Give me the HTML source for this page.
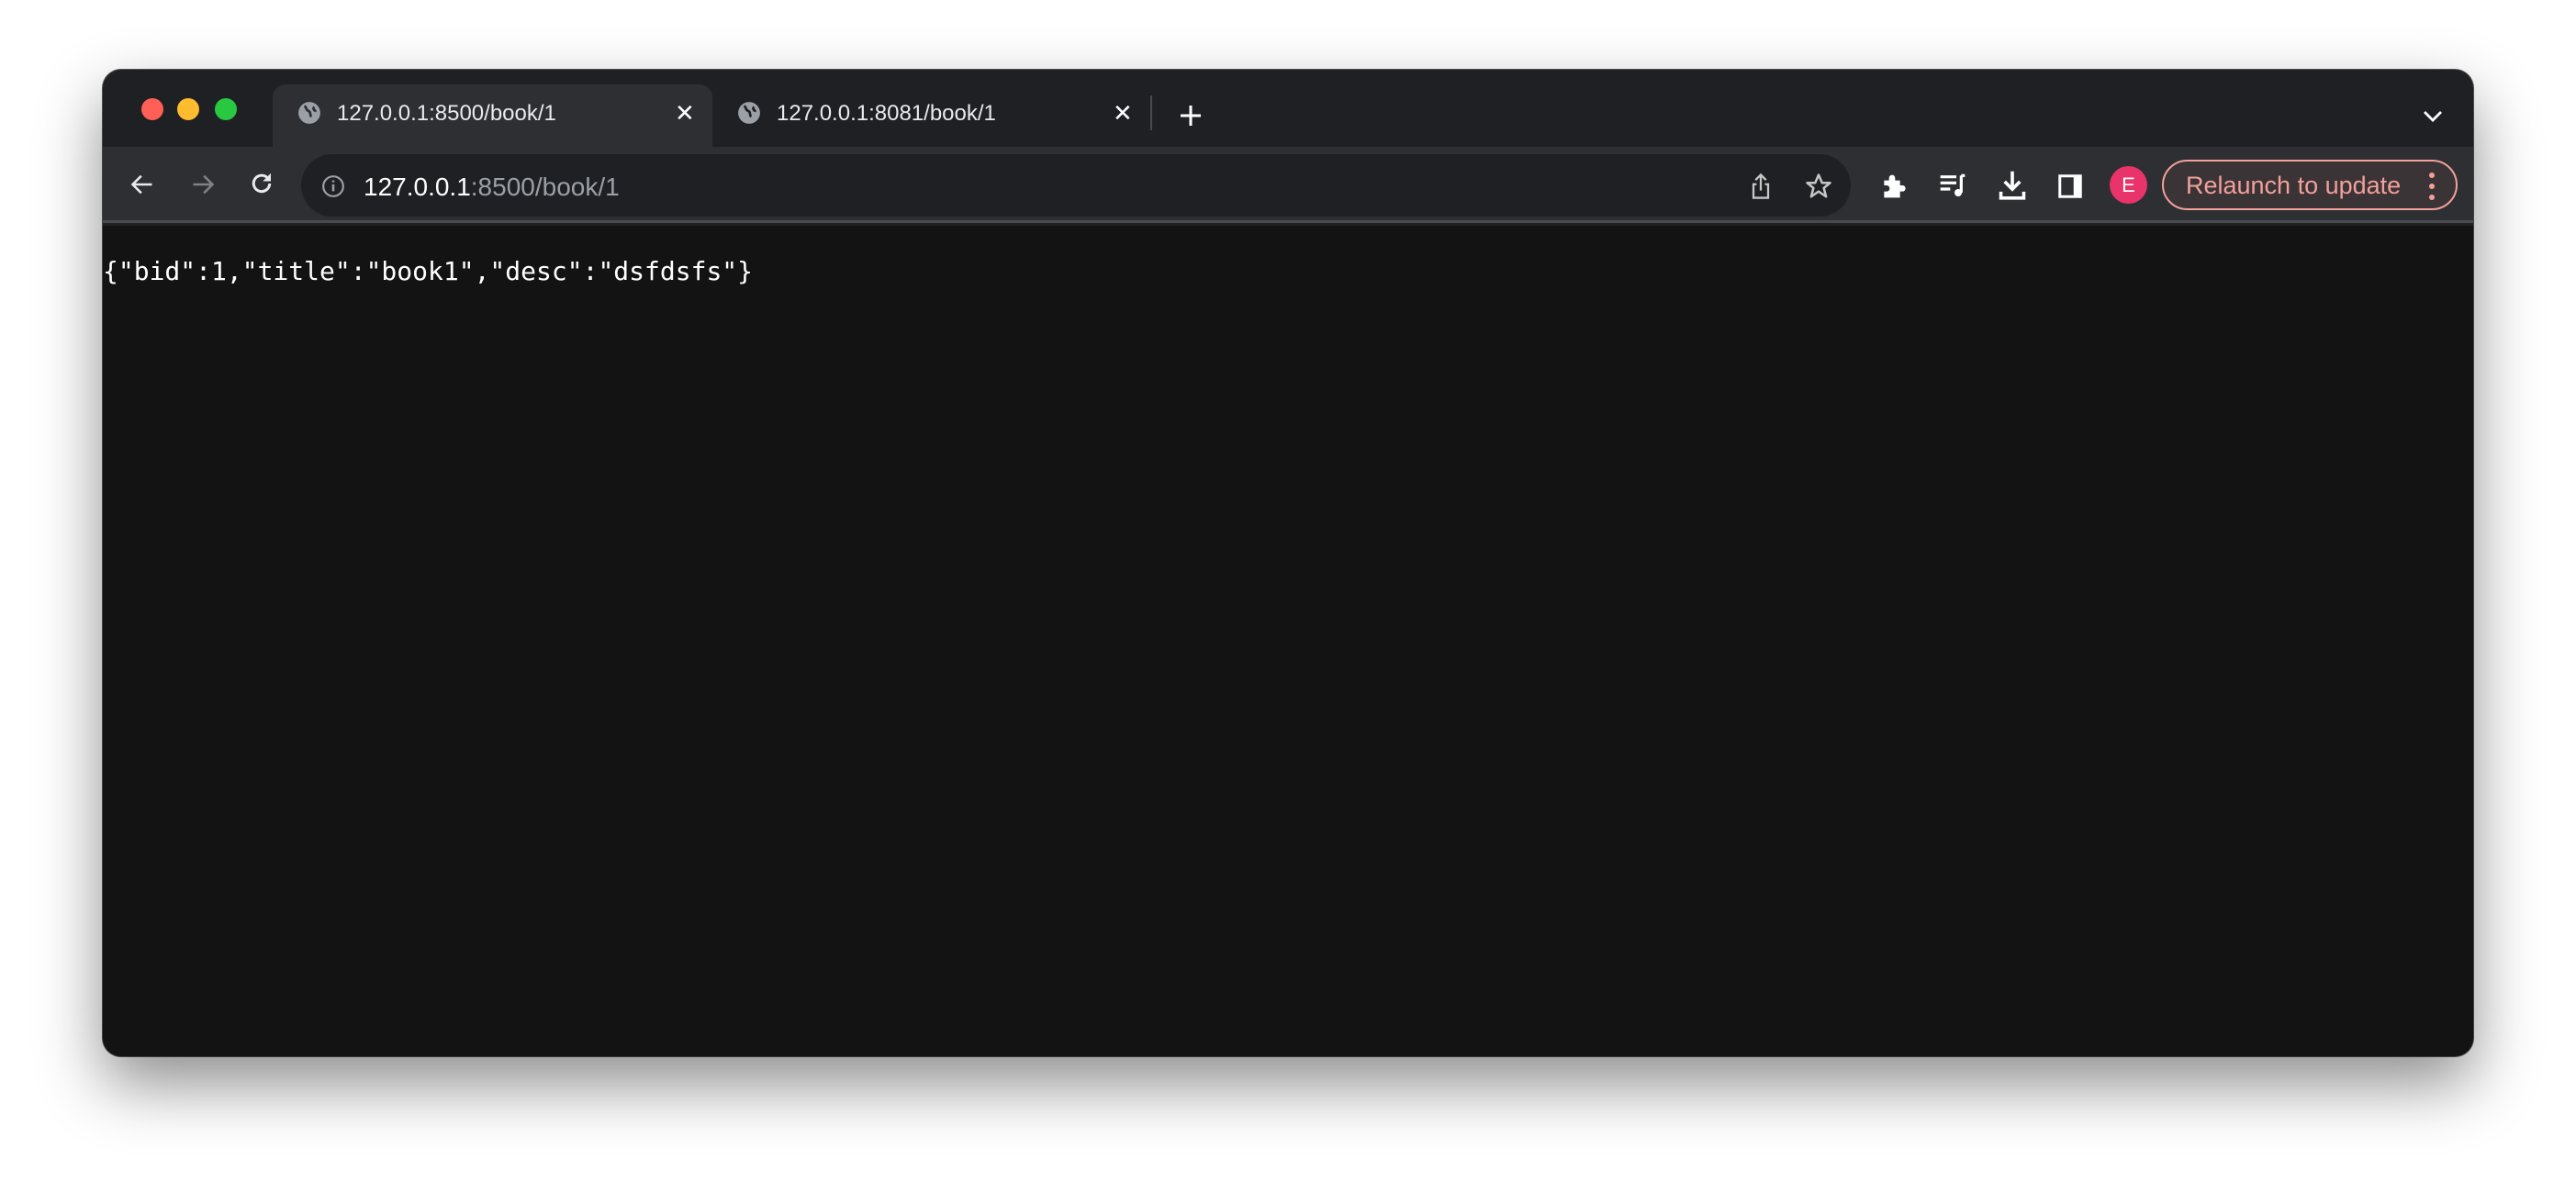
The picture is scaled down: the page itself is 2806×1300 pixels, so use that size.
<!DOCTYPE html>
<html><head><meta charset="utf-8"><style>
*{margin:0;padding:0;box-sizing:border-box}
body{width:2806px;height:1300px;background:#fff;position:relative;overflow:hidden;font-family:"Liberation Sans",sans-serif}
.win{position:absolute;left:112px;top:76px;width:2582px;height:1075px;background:#1f2023;border-radius:20px;overflow:hidden;box-shadow:0 30px 70px rgba(0,0,0,.45),0 0 0 1px #555}
.dot{position:absolute;top:31px;width:24px;height:24px;border-radius:50%}
.tab{position:absolute;top:16px;left:185px;width:479px;height:70px;background:#2e2f33;border-radius:14px 14px 0 0}
.t{position:absolute;color:#e8eaed;font-size:24px;top:34px}
.x{position:absolute;color:#fff;font-size:26px;top:32px}
.tb{position:absolute;left:0;top:84px;width:100%;height:83px;background:#2e2f33;border-bottom:3px solid #4a4b4f}
.omni{position:absolute;left:216px;top:8px;width:1688px;height:68px;background:#1f2023;border-radius:34px}
.content{position:absolute;left:0;top:170px;width:100%;bottom:0;background:#131313}
.json{position:absolute;left:0;top:33px;font-family:"DejaVu Sans Mono","Liberation Mono",monospace;font-size:28px;color:#fff;white-space:pre}
svg{position:absolute}
</style></head><body>
<div class="win">
 <div class="dot" style="left:42px;background:#fe5f57"></div>
 <div class="dot" style="left:81px;background:#febc2e"></div>
 <div class="dot" style="left:122px;background:#28c840"></div>
 <div class="tab"></div>
 <svg style="left:212px;top:34px" width="26" height="26" viewBox="0 0 24 24"><circle cx="12" cy="12" r="11" fill="#9aa0a6"/><path d="M7 5c3 2 1 4 4 5s1 4 3 6M17 6c-2 2 0 4 2 4" stroke="#2e2f33" stroke-width="2.5" fill="none"/></svg>
 <div class="t" style="left:255px">127.0.0.1:8500/book/1</div>
 <div class="x" style="left:623px">✕</div>
 <svg style="left:691px;top:34px" width="26" height="26" viewBox="0 0 24 24"><circle cx="12" cy="12" r="11" fill="#9aa0a6"/><path d="M7 5c3 2 1 4 4 5s1 4 3 6M17 6c-2 2 0 4 2 4" stroke="#1f2023" stroke-width="2.5" fill="none"/></svg>
 <div class="t" style="left:734px">127.0.0.1:8081/book/1</div>
 <div class="x" style="left:1100px">✕</div>
 <div style="position:absolute;left:1141px;top:28px;width:2px;height:38px;background:#4a4b4f"></div>
 <svg style="left:1172px;top:37px" width="26" height="26" viewBox="0 0 26 26"><path d="M13 2v22M2 13h22" stroke="#fff" stroke-width="3"/></svg>
 <svg style="left:2527px;top:44px" width="22" height="14" viewBox="0 0 22 14"><path d="M2 2l9 9 9-9" stroke="#fff" stroke-width="2.8" fill="none"/></svg>
 <div class="tb">
  <svg style="left:29px;top:27px" width="28" height="28" viewBox="0 0 24 24"><path d="M21 12H4M11 4l-8 8 8 8" stroke="#e8eaed" stroke-width="2.2" fill="none"/></svg>
  <svg style="left:95px;top:27px" width="28" height="28" viewBox="0 0 24 24"><path d="M3 12h17M13 4l8 8-8 8" stroke="#7f8185" stroke-width="2.2" fill="none"/></svg>
  <svg style="left:158px;top:25px" width="30" height="30" viewBox="0 0 24 24"><path d="M19 12a7 7 0 1 1-2-5" stroke="#e8eaed" stroke-width="2.4" fill="none"/><path d="M20 3v7h-7z" fill="#e8eaed"/></svg>
  <div class="omni">
   <svg style="left:22px;top:22px" width="26" height="26" viewBox="0 0 24 24"><circle cx="12" cy="12" r="10" stroke="#9aa0a6" stroke-width="2" fill="none"/><path d="M12 10v7M12 6v2" stroke="#9aa0a6" stroke-width="2.4"/></svg>
   <div style="position:absolute;left:68px;top:20px;font-size:28px;color:#fff">127.0.0.1<span style="color:#9aa0a6">:8500/book/1</span></div>
   <svg style="left:1576px;top:19px" width="28" height="32" viewBox="0 0 24 28"><path d="M12 18V3M7 8l5-5 5 5M8 12H5v13h14V12h-3" stroke="#c4c7c5" stroke-width="2" fill="none"/></svg>
   <svg style="left:1638px;top:20px" width="30" height="30" viewBox="0 0 24 24"><path d="M12 2l3 7h7l-5.5 4.5 2 7.5-6.5-4.5-6.5 4.5 2-7.5L2 9h7z" stroke="#c4c7c5" stroke-width="2" fill="none" stroke-linejoin="round"/></svg>
  </div>
  <svg style="left:1935px;top:26px" width="32" height="32" viewBox="0 0 24 24"><path d="M4 8h4V6a2.5 2.5 0 0 1 5 0v2h4v4h2a2.5 2.5 0 0 1 0 5h-2v5H4v-5h2a2.5 2.5 0 0 0 0-5H4z" fill="#fff"/></svg>
  <svg style="left:1999px;top:26px" width="32" height="32" viewBox="0 0 24 24"><path d="M2 5h13M2 10h13M2 15h8" stroke="#fff" stroke-width="2.4"/><path d="M19 4v14" stroke="#fff" stroke-width="2.4"/><circle cx="16.5" cy="18" r="3" fill="#fff"/><path d="M19 4h3" stroke="#fff" stroke-width="2.4"/></svg>
  <svg style="left:2063px;top:24px" width="34" height="36" viewBox="0 0 24 26"><path d="M12 2v14M6 10l6 6 6-6M3 18v5h18v-5" stroke="#fff" stroke-width="2.6" fill="none"/></svg>
  <svg style="left:2128px;top:28px" width="30" height="30" viewBox="0 0 24 24"><path d="M3 3h18v18H3z" stroke="#fff" stroke-width="2.4" fill="none"/><path d="M15 3h6v18h-6z" fill="#fff"/></svg>
  <div style="position:absolute;left:2186px;top:21px;width:41px;height:41px;border-radius:50%;background:#e8336b;color:#fff;font-size:22px;text-align:center;line-height:41px">E</div>
  <div style="position:absolute;left:2243px;top:14px;width:322px;height:55px;border-radius:28px;border:2.5px solid #f2a09a;background:#3b3437"></div>
  <div style="position:absolute;left:2269px;top:27px;font-size:27px;color:#f2a09a">Relaunch to update</div>
  <svg style="left:2533px;top:27px" width="8" height="32" viewBox="0 0 8 32"><circle cx="4" cy="4" r="3" fill="#f2a09a"/><circle cx="4" cy="16" r="3" fill="#f2a09a"/><circle cx="4" cy="28" r="3" fill="#f2a09a"/></svg>
 </div>
 <div class="content"><div class="json">{"bid":1,"title":"book1","desc":"dsfdsfs"}</div></div>
</div>
</body></html>
